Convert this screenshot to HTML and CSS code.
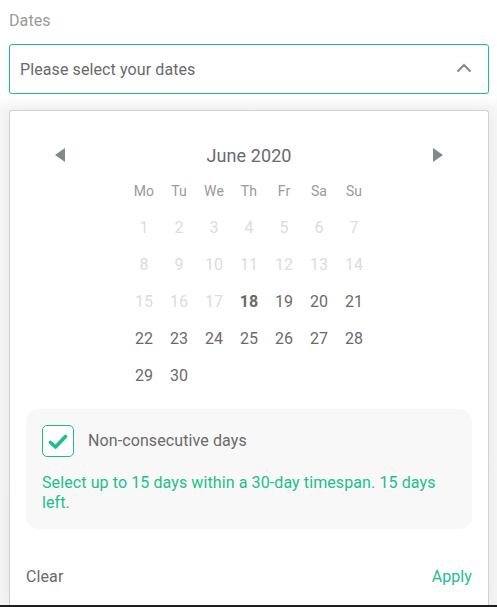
FILE: index.html
```html
<!DOCTYPE html>
<html lang="en">
<head>
<meta charset="utf-8">
<title>Dates</title>
<link rel="stylesheet" href="styles.css">
</head>
<body>
<div class="page">
  <label class="field-label">Dates</label>
  <div class="select">
    <span class="select-text">Please select your dates</span>
    <svg class="chevron" width="16" height="10" viewBox="0 0 16 10"><polyline points="1.5,8.5 8,2 14.5,8.5" fill="none" stroke="#8a8a8a" stroke-width="2.2"/></svg>
  </div>
  <div class="popup">
    <div class="cal-header">
      <svg class="nav" width="10" height="14" viewBox="0 0 10 14"><polygon points="10,0 10,14 0,7" fill="#7d8b8b"/></svg>
      <span class="month">June 2020</span>
      <svg class="nav" width="10" height="14" viewBox="0 0 10 14"><polygon points="0,0 0,14 10,7" fill="#7d8b8b"/></svg>
    </div>
    <div class="grid">
      <span class="wd">Mo</span><span class="wd">Tu</span><span class="wd">We</span><span class="wd">Th</span><span class="wd">Fr</span><span class="wd">Sa</span><span class="wd">Su</span>
      <span class="day off">1</span><span class="day off">2</span><span class="day off">3</span><span class="day off">4</span><span class="day off">5</span><span class="day off">6</span><span class="day off">7</span>
      <span class="day off">8</span><span class="day off">9</span><span class="day off">10</span><span class="day off">11</span><span class="day off">12</span><span class="day off">13</span><span class="day off">14</span>
      <span class="day off">15</span><span class="day off">16</span><span class="day off">17</span><span class="day today">18</span><span class="day">19</span><span class="day">20</span><span class="day">21</span>
      <span class="day">22</span><span class="day">23</span><span class="day">24</span><span class="day">25</span><span class="day">26</span><span class="day">27</span><span class="day">28</span>
      <span class="day">29</span><span class="day">30</span>
    </div>
    <div class="options">
      <div class="check-row">
        <span class="checkbox">
          <svg width="20" height="16" viewBox="0 0 20 16"><polyline points="2.5,8.5 7.5,13 17.5,2.5" fill="none" stroke="#1cbf8c" stroke-width="3.6" stroke-linecap="round" stroke-linejoin="round"/></svg>
        </span>
        <span class="check-label">Non-consecutive days</span>
      </div>
      <p class="hint">Select up to 15 days within a 30-day timespan. 15 days left.</p>
    </div>
    <div class="footer">
      <span class="clear">Clear</span>
      <span class="apply">Apply</span>
    </div>
  </div>
</div>
<div class="bottom-line"></div>
</body>
</html>
```
FILE: styles.css
```css
html, body {
  margin: 0;
  padding: 0;
  background: #f7f7f7;
  font-family: Roboto, "Liberation Sans", sans-serif;
  overflow: hidden;
}
body {
  background: linear-gradient(#ffffff 0, #ffffff 95px, #f6f6f6 110px, #f4f4f4 100%);
  height: 607px;
  display: flex;
  flex-direction: column;
}
.page {
  padding: 0 8px 0 9px;
  flex: 1;
  letter-spacing: 0.1px;
}
.field-label {
  display: block;
  margin-top: 11px;
  font-size: 16px;
  line-height: 20px;
  color: #9a9a9a;
}
.select {
  margin-top: 13px;
  height: 48px;
  border: 1px solid #1cbf8c;
  border-radius: 3px;
  background: #fff;
  display: flex;
  align-items: center;
  justify-content: space-between;
  padding: 0 16px 0 10px;
}
.select-text {
  font-size: 16px;
  color: #6a6a6a;
}
.chevron {
  display: block;
  margin-top: -2px;
}
.popup {
  margin-top: 16px;
  border: 1px solid #d2d2d2;
  border-bottom: none;
  border-radius: 3px 3px 0 0;
  background: #fff;
  box-shadow: 0 0 14px rgba(0, 0, 0, 0.06);
  padding: 26px 16px 0;
  height: 468px;
}
.cal-header {
  height: 36px;
  display: flex;
  align-items: center;
  justify-content: space-between;
  padding: 0 29px;
}
.nav {
  display: block;
}
.month {
  font-size: 18px;
  color: #6a6a6a;
}
.grid {
  width: 245px;
  margin: 0 auto;
  display: grid;
  grid-template-columns: repeat(7, 35px);
  grid-template-rows: 36px repeat(5, 37px);
  align-items: center;
  justify-items: center;
}
.wd {
  font-size: 14px;
  color: #9a9a9a;
}
.day {
  font-size: 16px;
  color: #6a6a6a;
}
.day.off {
  color: #dcdcdc;
}
.day.today {
  font-weight: 700;
  color: #6a6a6a;
}
.options {
  margin-top: 15px;
  background: #f8f8f8;
  border-radius: 13px;
  padding: 16px;
}
.check-row {
  display: flex;
  align-items: center;
  gap: 14px;
}
.checkbox {
  width: 30px;
  height: 30px;
  border: 1px solid #1cbf8c;
  border-radius: 5px;
  display: flex;
  align-items: center;
  justify-content: center;
  background: #fff;
  flex: none;
}
.checkbox svg {
  display: block;
  margin-top: 1px;
}
.check-label {
  font-size: 16px;
  color: #6a6a6a;
  margin-top: -2px;
}
.hint {
  margin: 16px 0 0;
  font-size: 16px;
  line-height: 20px;
  color: #1cbf8c;
}
.footer {
  margin-top: 38px;
  display: flex;
  justify-content: space-between;
  font-size: 16px;
  line-height: 20px;
}
.clear {
  color: #6a6a6a;
}
.apply {
  color: #1cbf8c;
}
.bottom-line {
  height: 2px;
  background: #1e1e1e;
  flex: none;
}
```
